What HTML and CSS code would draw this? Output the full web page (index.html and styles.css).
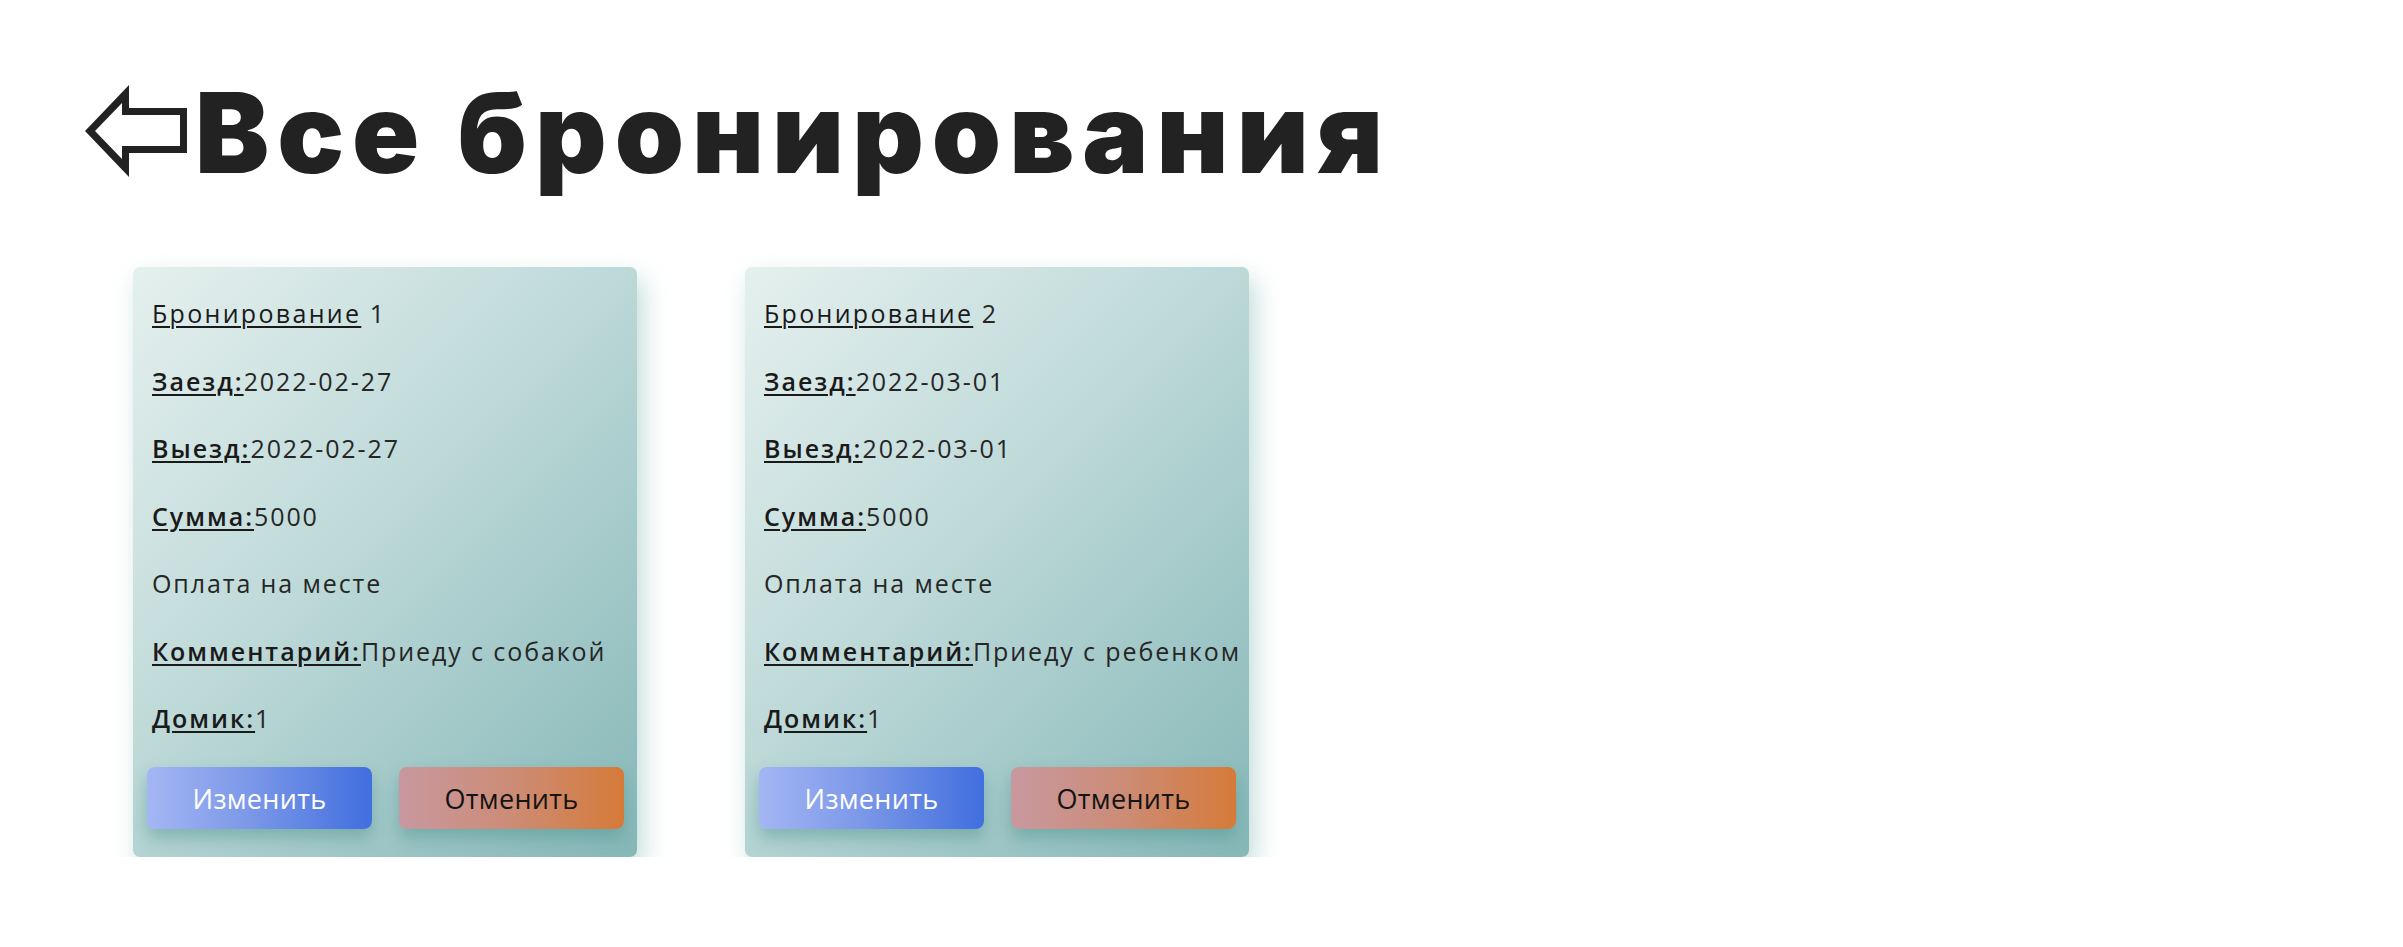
FILE: index.html
```html
<!DOCTYPE html>
<html lang="ru">
<head>
<meta charset="utf-8">
<title>Все бронирования</title>
<link rel="stylesheet" href="styles.css">
</head>
<body>
<main class="page">
  <header class="title-row">
    <a class="back" href="#" aria-label="Назад">
      <svg class="back-icon" viewBox="0 0 102 92" width="102" height="92">
        <path fill="#222" fill-rule="evenodd" d="M0 46 L44 0 L44 23 L102 23 L102 68 L44 68 L44 92 Z M10 46 L37 74 L37 61 L95 61 L95 30 L37 30 L37 18 Z"/>
      </svg>
    </a>
    <h1 class="title">Все бронирования</h1>
  </header>

  <section class="cards">
    <article class="card">
      <div class="rows">
        <p class="row"><u class="label label-plain">Бронирование</u> 1</p>
        <p class="row"><u class="label">Заезд:</u>2022-02-27</p>
        <p class="row"><u class="label">Выезд:</u>2022-02-27</p>
        <p class="row"><u class="label">Сумма:</u>5000</p>
        <p class="row">Оплата на месте</p>
        <p class="row"><u class="label">Комментарий:</u>Приеду с собакой</p>
        <p class="row"><u class="label">Домик:</u>1</p>
      </div>
      <div class="actions">
        <button class="btn btn-edit">Изменить</button>
        <button class="btn btn-cancel">Отменить</button>
      </div>
    </article>

    <article class="card">
      <div class="rows">
        <p class="row"><u class="label label-plain">Бронирование</u> 2</p>
        <p class="row"><u class="label">Заезд:</u>2022-03-01</p>
        <p class="row"><u class="label">Выезд:</u>2022-03-01</p>
        <p class="row"><u class="label">Сумма:</u>5000</p>
        <p class="row">Оплата на месте</p>
        <p class="row"><u class="label">Комментарий:</u>Приеду с ребенком</p>
        <p class="row"><u class="label">Домик:</u>1</p>
      </div>
      <div class="actions">
        <button class="btn btn-edit">Изменить</button>
        <button class="btn btn-cancel">Отменить</button>
      </div>
    </article>
  </section>
</main>
</body>
</html>
```

FILE: styles.css
```css
* {
  box-sizing: border-box;
}

html, body {
  margin: 0;
  background: #ffffff;
}

body {
  font-family: "Open Sans", "Noto Sans", sans-serif;
  color: #222222;
}

.page {
  padding: 85px 0 0 85px;
}

.title-row {
  display: flex;
  align-items: flex-start;
  gap: 8px;
  height: 182px;
}

.back {
  display: block;
  width: 102px;
  height: 92px;
}

.back-icon {
  display: block;
}

.title {
  margin: 0;
  margin-top: -19px;
  font-family: "Inter", "Open Sans", sans-serif;
  font-weight: 900;
  font-size: 111px;
  line-height: 134px;
  letter-spacing: 8px;
  color: #222222;
  white-space: nowrap;
}

.cards {
  display: flex;
  gap: 108px;
  margin-left: 48px;
}

.card {
  width: 504px;
  height: 590px;
  border-radius: 7px;
  padding: 29px 13px 28px 14px;
  display: flex;
  flex-direction: column;
  justify-content: space-between;
  background: linear-gradient(135deg, #e5f0ee 0%, #c2dcdb 40%, #a4c9c9 70%, #86b7b7 100%);
  box-shadow: 6px 12px 24px rgba(110, 175, 165, 0.42);
}

.rows {
  display: flex;
  flex-direction: column;
  gap: 33.5px;
  padding-left: 5px;
}

.row {
  margin: 0;
  font-size: 25px;
  line-height: 34px;
  font-weight: 400;
  letter-spacing: 1.9px;
  color: #262626;
  white-space: nowrap;
}

.label {
  font-weight: 600;
  letter-spacing: 2px;
  color: #1a1a1a;
  text-decoration-thickness: 2px;
  text-underline-offset: 3px;
}

.label-plain {
  font-weight: 400;
  letter-spacing: 2.3px;
}

.actions {
  display: grid;
  grid-template-columns: 225px 225px;
  gap: 27px;
}

.btn {
  height: 62px;
  border: none;
  border-radius: 8px;
  font-family: "Open Sans", "Noto Sans", sans-serif;
  font-size: 27px;
  font-weight: 400;
  letter-spacing: 0.3px;
  cursor: pointer;
  box-shadow: 0 9px 16px rgba(70, 145, 140, 0.45);
}

.btn-edit {
  color: #ffffff;
  background: linear-gradient(90deg, #a4b6f4 0%, #7c98e8 45%, #416fdf 100%);
}

.btn-cancel {
  color: #141414;
  background: linear-gradient(90deg, #c8989f 0%, #cc8c76 50%, #d67a39 100%);
}
```
